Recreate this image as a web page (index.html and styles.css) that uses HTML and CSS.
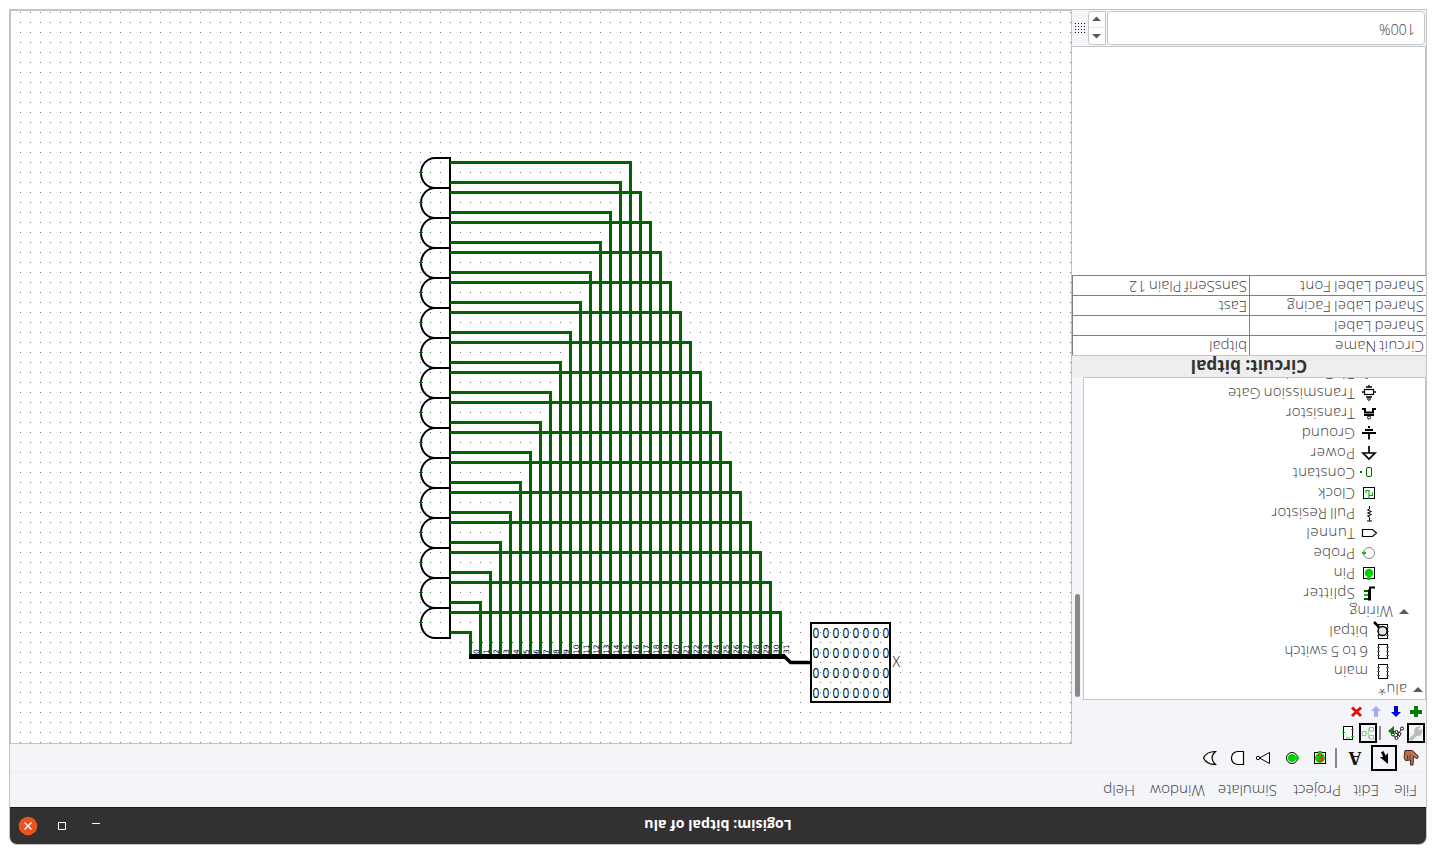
FILE: index.html
```
<!DOCTYPE html>
<html lang="en">
<head>
<meta charset="utf-8">
<title>Logisim: bitpal of alu</title>
<link rel="stylesheet" href="styles.css">
</head>
<body>
<div class="desktop">
<div class="window">
  <header class="titlebar">
    <span></span>
    <span class="title">Logisim: bitpal of alu</span>
    <svg class="controls" width="92" height="36" viewBox="10 808 92 36">
      <circle cx="28" cy="826" r="9.3" fill="#e95420"/>
      <path d="M24.5 822.5l7 7m0-7l-7 7" stroke="#fff" stroke-width="1.4"/>
      <path d="M58.5 822.5h7v7h-7zM92 823.5h8" fill="none" stroke="#fff"/>
    </svg>
  </header>
  <nav class="menubar">
    <span class="m-file">File</span><span class="m-edit">Edit</span><span class="m-project">Project</span><span class="m-sim">Simulate</span><span class="m-win">Window</span><span class="m-help">Help</span>
  </nav>
  <div class="toolbar">
    <svg class="poke" width="27" height="26" viewBox="1397 745 27 26">
      <path d="M1405 750.500h7.500l5.500 5.500v2l-1.500 .5-3-2-.5 8.500h-2.500v-5l-5 .5-1.500-3z" fill="#b87052" stroke="#4b2318"/>
      <path d="M1407.500 755v4.500m2.500-5v5" stroke="#4b2318" stroke-width=".8" fill="none"/>
    </svg>
    <svg width="26" height="26" viewBox="1371 745 26 26">
      <rect x="1372" y="746" width="24" height="24" fill="none" stroke="#000" stroke-width="2"/>
      <path d="M1388 764v-11l-2.500 2.500-2-4.500-2.500 1.200 2.200 4.800h-3.500z" fill="#000"/>
    </svg>
    <span class="text-tool">A</span>
    <span class="sep"></span>
    <svg class="gap-a" width="28" height="26" viewBox="1306 745 28 26">
      <rect x="1314.500" y="752.500" width="11" height="11" fill="#fff" stroke="#000"/>
      <circle cx="1320" cy="758" r="5" fill="#00d400"/><path d="M1318 751h4v3h-4z" fill="#00d400"/>
      <path d="M1318 755q4-.8 4 1.400 0 1.500-3 1.500 3.500 0 3.500 1.700 0 2.200-4.500 1.500" fill="none" stroke="#d03a10" stroke-width="1.600"/>
    </svg>
    <svg width="28" height="26" viewBox="1278 745 28 26">
      <circle cx="1292" cy="758" r="5.500" fill="#fff" stroke="#000"/>
      <circle cx="1292" cy="758" r="4" fill="#00d400"/><rect x="1296" y="756.500" width="3" height="3" fill="#00d400"/>
    </svg>
    <svg width="28" height="26" viewBox="1250 745 28 26">
      <path d="M1269.500 752.500v11l-10-5.500z" fill="#fff" stroke="#000"/><circle cx="1258" cy="758" r="1.700" fill="#fff" stroke="#000"/>
    </svg>
    <svg width="27" height="26" viewBox="1223 745 27 26">
      <path d="M1243.500 751.500h-6q-6 1-6 6.500t6 6.500h6z" fill="#fff" stroke="#000" stroke-width="1.200"/>
    </svg>
    <svg width="28" height="26" viewBox="1195 745 28 26">
      <path d="M1215.500 751.500q-9 0-12 6.500 3 6.500 12 6.500-7-6.500 0-13z" fill="#fff" stroke="#000" stroke-width="1.200"/>
    </svg>
  </div>
  <main class="body">
    <aside class="panel">
      <div class="row-tools">
        <svg width="19" height="20" viewBox="1407 723 19 20">
          <rect x="1408" y="724" width="16" height="18" fill="#f4f5f7" stroke="#000" stroke-width="2"/>
          <path d="M1410 740l7.500-7" stroke="#bbb" stroke-width="3.500"/><path d="M1421.500 729.500l-2.500 2.500-2-2 2-3q-4 1-4 4t2.500 4q4 .5 4-5.500" fill="#bbb" stroke="#bbb" stroke-width="1.800"/>
        </svg>
        <svg width="26" height="20" viewBox="1381 723 26 20">
          <path d="M1388 731l6-5v10z" fill="#0b7a12"/>
          <path d="M1392 734l4 4 6-10M1394 731l6 6" stroke="#000" stroke-width=".8" fill="none"/>
          <g fill="#fff" stroke="#000" stroke-width=".9"><circle cx="1393" cy="734.500" r="1.500"/><circle cx="1396.500" cy="738" r="1.500"/><circle cx="1399.500" cy="734" r="1.500"/><circle cx="1396.500" cy="732" r="1.500"/><circle cx="1402" cy="728.500" r="1.500"/></g>
        </svg>
        <span class="sep-small"></span>
        <svg width="20" height="20" viewBox="1358 723 20 20">
          <rect x="1360" y="724" width="16" height="18" fill="none" stroke="#000" stroke-width="2"/>
          <path d="M1366 733.500h2.500m0-5v9.500m0-9.500h3m-3 9.500h3" fill="none" stroke="#9be39b"/>
          <path d="M1362.500 731.500h3.500v4h-3.500zM1369.500 727.500h4v3.500h-4zM1369.500 735.500h4v3.500h-4z" fill="#fff" stroke="#aaa"/>
        </svg>
        <svg width="20" height="20" viewBox="1338 723 20 20">
          <rect x="1343.500" y="726.500" width="9" height="13" fill="#fff" stroke="#000"/>
          <path d="M1346.500 739v-1q1.500-2 3 0v1" fill="none" stroke="#999"/>
          <path d="M1342 732.500h3m6-3h3m-3 7h3" stroke="#0c0"/>
        </svg>
      </div>
      <div class="row-edit">
        <svg width="20" height="20" viewBox="1406 701 20 20"><path d="M1414 706h4v4h4v4h-4v3h-4v-3h-4v-4h4z" fill="#0a7a0a"/></svg>
        <svg width="20" height="20" viewBox="1386 701 20 20"><path d="M1394 706h4v6h3l-5 5-5-5h3z" fill="#0000dc"/></svg>
        <svg width="20" height="20" viewBox="1366 701 20 20"><path d="M1374 717h4v-6h3l-5-5-5 5h3z" fill="#a9a9ee"/></svg>
        <svg width="20" height="20" viewBox="1346 701 20 20"><path d="M1352 707.500l9 8.500m0-8.500l-9 8.500" stroke="#e01010" stroke-width="3"/></svg>
      </div>
      <div class="explorer">
        <div class="tree">
          <div class="folder root"><i class="tri"></i><span>alu*</span></div>
          <div class="leaf circ"><svg width="20" height="20" viewBox="1373 661 20 20"><use href="#chip" x="1373" y="661"/></svg><span>main</span></div>
          <div class="leaf circ"><svg width="20" height="20" viewBox="1373 661 20 20"><use href="#chip" x="1373" y="661"/></svg><span>6 to 5 switch</span></div>
          <div class="leaf circ"><svg width="20" height="20" viewBox="1373 661 20 20"><use href="#chip" x="1373" y="661"/><circle cx="1382.500" cy="671" r="4.500" fill="#dde" fill-opacity=".7" stroke="#000" stroke-width="1.300"/><path d="M1379 667l-5-5" stroke="#000" stroke-width="2.500"/></svg><span>bitpal</span></div>
          <div class="folder sub"><i class="tri"></i><span>Wiring</span></div>
          <div class="leaf"><svg width="20" height="20" viewBox="1359 583 20 20"><path d="M1375 587.500h-5v12h-1v-10" fill="none" stroke="#000" stroke-width="2"/><path d="M1364 591h4m-4 8h4" stroke="#050" stroke-width="2"/><path d="M1364 595h4" stroke="#0c0" stroke-width="2"/></svg><span class="wide">Splitter</span></div>
          <div class="leaf"><svg width="20" height="20" viewBox="1359 563 20 20"><rect x="1363.500" y="567.500" width="11" height="11" fill="#fff" stroke="#000"/><circle cx="1369" cy="573" r="4.300" fill="#00d400"/><path d="M1367.500 576h3v4h-3z" fill="#00d400"/></svg><span>Pin</span></div>
          <div class="leaf"><svg width="20" height="20" viewBox="1359 543 20 20"><circle cx="1369" cy="553" r="5.500" fill="#fff" stroke="#888"/><path d="M1362 553h4m-2-1.500v3" stroke="#0c0" stroke-width="2"/></svg><span>Probe</span></div>
          <div class="leaf"><svg width="20" height="20" viewBox="1359 523 20 20"><path d="M1362.500 529.500h10l4 3.500-4 3.500h-10z" fill="#fff" stroke="#000" stroke-width="1.200"/></svg><span class="wide">Tunnel</span></div>
          <div class="leaf"><svg width="20" height="20" viewBox="1359 503 20 20"><path d="M1369.500 506v3l-2 1 4 1.500-4 1.500 4 1.500-4 1.500 2 1v4m-2.500 0h5" fill="none" stroke="#000"/></svg><span>Pull Resistor</span></div>
          <div class="leaf"><svg width="20" height="20" viewBox="1359 483 20 20"><rect x="1363.500" y="487.500" width="11" height="11" fill="#fff" stroke="#000"/><path d="M1366 493v-2.500h3v5h3.500v-3M1369 496v3" fill="none" stroke="#0a0" stroke-width="1.100"/></svg><span>Clock</span></div>
          <div class="leaf"><svg width="20" height="20" viewBox="1359 463 20 20"><rect x="1366.500" y="467.500" width="5" height="9" rx="1.500" fill="none" stroke="#006400"/><path d="M1360 471h2v2h-2z" fill="#006400"/></svg><span>Constant</span></div>
          <div class="leaf"><svg width="20" height="20" viewBox="1359 443 20 20"><path d="M1369 446v7m-6 0h12l-6 6z" fill="none" stroke="#000" stroke-width="1.700"/></svg><span class="wide">Power</span></div>
          <div class="leaf"><svg width="20" height="20" viewBox="1359 423 20 20"><path d="M1362 433h14m-7 0v6.500m-4-9.500h8m-5-3h2" stroke="#000" stroke-width="1.800" fill="none"/></svg><span>Ground</span></div>
          <div class="leaf"><svg width="20" height="20" viewBox="1359 403 20 20"><path d="M1362 409h3v3.500h8v-3.500h3M1364 415h10" fill="none" stroke="#000" stroke-width="2"/><circle cx="1369" cy="417.500" r="1.500" fill="#fff" stroke="#000"/></svg><span>Transistor</span></div>
          <div class="leaf"><svg width="20" height="20" viewBox="1359 383 20 20"><rect x="1364.500" y="389.500" width="9" height="5" fill="#fff" stroke="#000" stroke-width="1.200"/><path d="M1362 392h2m10 0h2m-10-5h6m-3-2v2m-3 10h6" stroke="#000" stroke-width="1.300"/><circle cx="1369" cy="399" r="1.300" fill="#fff" stroke="#000"/></svg><span>Transmission Gate</span></div>
          <div class="leaf"><svg width="20" height="20" viewBox="1359 363 20 20"><path d="M1365 378h3" stroke="#000"/></svg><span>Bit Extender</span></div>
        </div>
        <div class="scroll"><i class="thumb"></i></div>
      </div>
      <h2 class="attr-title">Circuit: bitpal</h2>
      <div class="attrs">
        <span class="key">Circuit Name</span><span class="val">bitpal</span>
        <span class="key">Shared Label</span><span class="val"></span>
        <span class="key">Shared Label Facing</span><span class="val">East</span>
        <span class="key">Shared Label Font</span><span class="val">SansSerif Plain 12</span>
      </div>
      <div class="blank"></div>
      <div class="zoombar">
        <div class="zoom-field">100%</div>
        <svg class="spin" width="18" height="34" viewBox="1088 11 18 34">
          <path d="M1105.500 11.500h-14q-3 0-3 3v27q0 3 3 3h14z" fill="#fff" stroke="#c4c6ce"/>
          <path d="M1089 27.500h16" stroke="#e4e5e9"/>
          <path d="M1092 21l4.500-4.500 4.500 4.500zM1092 34l4.500 4.500 4.500-4.500z" fill="#5a5a5a"/>
        </svg>
        <svg class="gridbtn" width="16" height="34" viewBox="1072 11 16 34"><g id="gridDots" fill="#111"></g></svg>
      </div>
    </aside>
    <svg class="canvas" width="1060" height="732" viewBox="11 11 1060 732">
      <defs>
        <pattern id="grid" x="0" y="2" width="10" height="10" patternUnits="userSpaceOnUse"><rect width="1" height="1" fill="#777"/></pattern>
        <symbol id="chip" width="20" height="20" viewBox="0 0 20 20">
          <rect x="5.500" y="3.500" width="9" height="14" fill="#fff" stroke="#000"/>
          <path d="M4 6.500h3m-3 4h3m-3 4h3m6-8h3m-3 4h3m-3 4h3" stroke="#0b0"/>
        </symbol>
      </defs>
      <rect x="11" y="11" width="1060" height="732" fill="url(#grid)" shape-rendering="crispEdges"/>
      <g id="wires" fill="none" stroke="#006400" stroke-width="3" shape-rendering="crispEdges"></g>
      <g id="gates" fill="none" stroke="#000" stroke-width="2"></g>
      <g id="ports" fill="#006400" shape-rendering="crispEdges"></g>
      <path d="M469 656.500h316" stroke="#000" stroke-width="5"/>
      <path d="M784 656l6.500 6.500h21" fill="none" stroke="#000" stroke-width="3.500"/>
      <g id="bits" class="bits"></g>
      <rect x="811" y="623" width="79" height="79" fill="none" stroke="#000" stroke-width="2"/>
      <g id="zeros" class="zeros"></g>
      <text x="892.500" y="666.500" class="xval">X</text>
    </svg>
  </main>
</div>
</div>
<script src="circuit.js"></script>
</body>
</html>
```
FILE: styles.css
```
* { box-sizing: border-box; }
body { margin: 0; background: #fff; overflow: hidden; }
.desktop { width: 1436px; height: 852px; padding: 7px 9px 9px; transform: rotate(180deg); font-family: "Open Sans", "Noto Sans", sans-serif; font-weight: 300; color: #3c3c42; }
.window { width: 1418px; height: 836px; border: 1px solid #c2c3c6; border-radius: 8px 8px 0 0; overflow: hidden; display: flex; flex-direction: column; background: #f4f5f8; }
svg { display: block; flex: none; transform: rotate(180deg); }
.titlebar { height: 37px; flex: none; display: grid; grid-template-columns: 1fr auto 1fr; background: #333031; border-bottom: 1px solid #1c1a1b; color: #fff; }
.title { font-size: 14.2px; font-weight: 700; line-height: 38px; height: 36px; }
.controls { justify-self: end; }
.menubar { height: 35px; flex: none; display: flex; padding-left: 9px; border-bottom: 1px solid #ebecee; font-size: 15.2px; line-height: 33px; white-space: nowrap; }
.m-file { width: 38px; } .m-edit { width: 38px; } .m-project { width: 64px; } .m-sim { width: 72px; } .m-win { width: 70px; }
.toolbar { height: 28px; flex: none; display: flex; align-items: center; padding-left: 2px; }
.text-tool { width: 30px; text-align: center; font: bold 18px/24px "Liberation Serif", serif; color: #111; transform: translateX(1px); }
.sep { width: 2px; height: 20px; margin-left: 4px; background: #888; }
.gap-a { margin-left: 1px; }
.body { flex: 1; display: flex; min-height: 0; }
.panel { width: 355px; flex: none; display: flex; flex-direction: column; border-right: 1px solid #c2c3c8; }
.canvas { margin-top: 1px; background: #fff; outline: 1px solid #c2c3c8; }
.row-tools { height: 22px; display: flex; padding-top: 1px; }
.row-edit { height: 22px; display: flex; padding-top: 1px; }
.sep-small { width: 2px; height: 14px; margin: 3px 1px 0 0; background: #888; }
.explorer { height: 323px; flex: none; display: flex; }
.tree { width: 344px; height: 323px; overflow: hidden; background: #fff; border: 1px solid #c4c5c9; font-size: 15px; letter-spacing: .2px; word-spacing: -1.2px; color: #404040; white-space: nowrap; }
.folder { height: 18px; display: flex; align-items: center; }
.folder span, .leaf span { padding-bottom: 2px; }
.folder span { padding-bottom: 1px; }
.root { padding-left: 2px; }
.sub { padding-left: 16px; }
.tri { width: 0; height: 0; border: 5px solid transparent; border-top-color: #5a5a5a; border-bottom: 0; margin-right: 6px; }
.leaf { height: 20px; display: flex; align-items: center; padding-left: 46px; gap: 4px; line-height: 20px; }
.circ { padding-left: 32px; gap: 5px; }
.wide { letter-spacing: .5px; }
.scroll { flex: 1; padding: 3px 3px 0; }
.thumb { display: block; width: 5px; height: 103px; border-radius: 3px; background: #888; }
.attr-title { height: 21px; flex: none; margin: 0; background: #eee; font-size: 17.2px; line-height: 21px; font-weight: 700; text-align: center; color: #333; }
.attrs { flex: none; display: grid; grid-template-columns: 177px 177px; grid-auto-rows: 20px; background: #fff; border-top: 1px solid #c4c5c9; font-size: 15px; line-height: 17px; color: #404040; white-space: nowrap; }
.key, .val { border: solid #808080; border-width: 0 1px 1px 0; padding-left: 2px; }
.key { letter-spacing: .3px; word-spacing: -1.5px; }
.val { letter-spacing: .05px; word-spacing: -1px; }
.blank { flex: 1; background: #fff; border-left: 1px solid #c4c5c9; border-bottom: 1px solid #c4c5c9; }
.zoombar { height: 36px; flex: none; display: flex; padding: 1px 0 0 1px; }
.zoom-field { width: 318px; height: 34px; border: 1px solid #c4c6ce; border-radius: 4px; background: #fff; padding-left: 9px; font-size: 14.3px; line-height: 30px; color: #404040; }
.spin { margin-left: 1px; }
.bits { font: 7.5px "DejaVu Sans", sans-serif; letter-spacing: -.1px; fill: #000; }
.zeros { font: 14.5px "Open Sans", sans-serif; fill: #000; text-anchor: middle; }
.xval { font: 300 14px "Open Sans", sans-serif; fill: #000; }
```
FILE: circuit.js
```
const wires = [], gates = [], ports = [], bits = [], zeros = [];
for (let i = 0; i < 16; i++) {
  const up = 162.5 + 30 * i, low = up + 20, top = 158 + 30 * i;
  wires.push(`<path d="M450 ${up}H${630.5 + 10 * i}V655"/><path d="M450 ${low}H${620.5 - 10 * i}V655"/>`);
  gates.push(`<path d="M450 ${top}h-15a14 15 0 0 0 0 30h15z"/>`);
  ports.push(`<path d="M419 ${top + 14}h4v1h-4zM420 ${top + 13}h2v3h-2zM450 ${up - 1.5}h3v3h-3zM450 ${low - 1.5}h3v3h-3z"/>`);
}
for (let b = 0; b < 32; b++) {
  bits.push(`<text transform="translate(${478.5 + 10 * b} 654) rotate(-90)">${b}</text>`);
  ports.push(`<rect x="${472 + 10 * b}" y="642" width="1" height="1"/>`);
}
for (let r = 0; r < 4; r++)
  for (let c = 0; c < 8; c++)
    zeros.push(`<text transform="translate(${816 + 10 * c} ${638 + 20 * r}) scale(.82 1)">0</text>`);
let dots = "";
for (let y = 0; y < 4; y++)
  for (let x = 0; x < 4; x++)
    dots += `<rect x="${1075 + 3 * x}" y="${23 + 3 * y}" width="1" height="1"/>`;
const fill = (id, parts) => { document.getElementById(id).innerHTML = parts; };
fill("wires", wires.join(""));
fill("gates", gates.join(""));
fill("ports", ports.join(""));
fill("bits", bits.join(""));
fill("zeros", zeros.join(""));
fill("gridDots", dots);
```
